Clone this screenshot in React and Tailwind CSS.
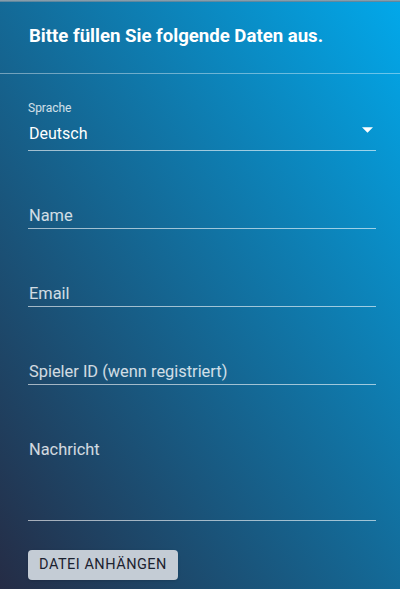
export default function App() {
  return (
    <div className="w-[400px] h-[589px] overflow-hidden bg-[linear-gradient(to_top_right,#252c45,#02a8ea)] font-['Roboto',sans-serif] text-white">
      {/* shadow from the bar above */}
      <div className="h-[2px] bg-gradient-to-b from-[#9aa7b0] to-[#4b7d99]" />

      {/* Header */}
      <div className="h-[72px] border-b border-white/40 flex items-center px-[29px] pb-[4px]">
        <h1 className="text-[18.6px] font-bold leading-[22px]">Bitte füllen Sie folgende Daten aus.</h1>
      </div>

      <form className="pl-[28px] pr-[24px]" onSubmit={(e) => e.preventDefault()}>
        {/* Sprache select */}
        <div className="mt-[27px] border-b border-white/60 pb-[7px]">
          <div className="text-[12px] leading-[14px] text-white/80">Sprache</div>
          <div className="mt-[9px] flex items-start justify-between">
            <span className="text-[16px] leading-[19px] pl-[1px]">Deutsch</span>
            <svg width="11" height="6" viewBox="0 0 10 5" className="mt-[3px] mr-[3px]">
              <path d="M0 0l5 5 5-5z" fill="white" />
            </svg>
          </div>
        </div>

        {["Name", "Email", "Spieler ID (wenn registriert)"].map((label) => (
          <div key={label} className="mt-[55px] border-b border-white/60 pb-[3px]">
            <div className="text-[16.4px] leading-[19px] text-white/80 pl-[1px]">{label}</div>
          </div>
        ))}

        {/* Nachricht */}
        <div className="mt-[55px] border-b border-white/60 pb-[61px]">
          <div className="text-[16.4px] leading-[19px] text-white/80 pl-[1px]">Nachricht</div>
        </div>

        <button
          type="button"
          className="mt-[29px] h-[30px] w-[150px] rounded-[4px] bg-[#c4ccd5] text-[#1c2230] text-[14.5px] leading-[16px] tracking-[0.5px] uppercase shadow-sm"
        >
          Datei anhängen
        </button>
      </form>
    </div>
  );
}
